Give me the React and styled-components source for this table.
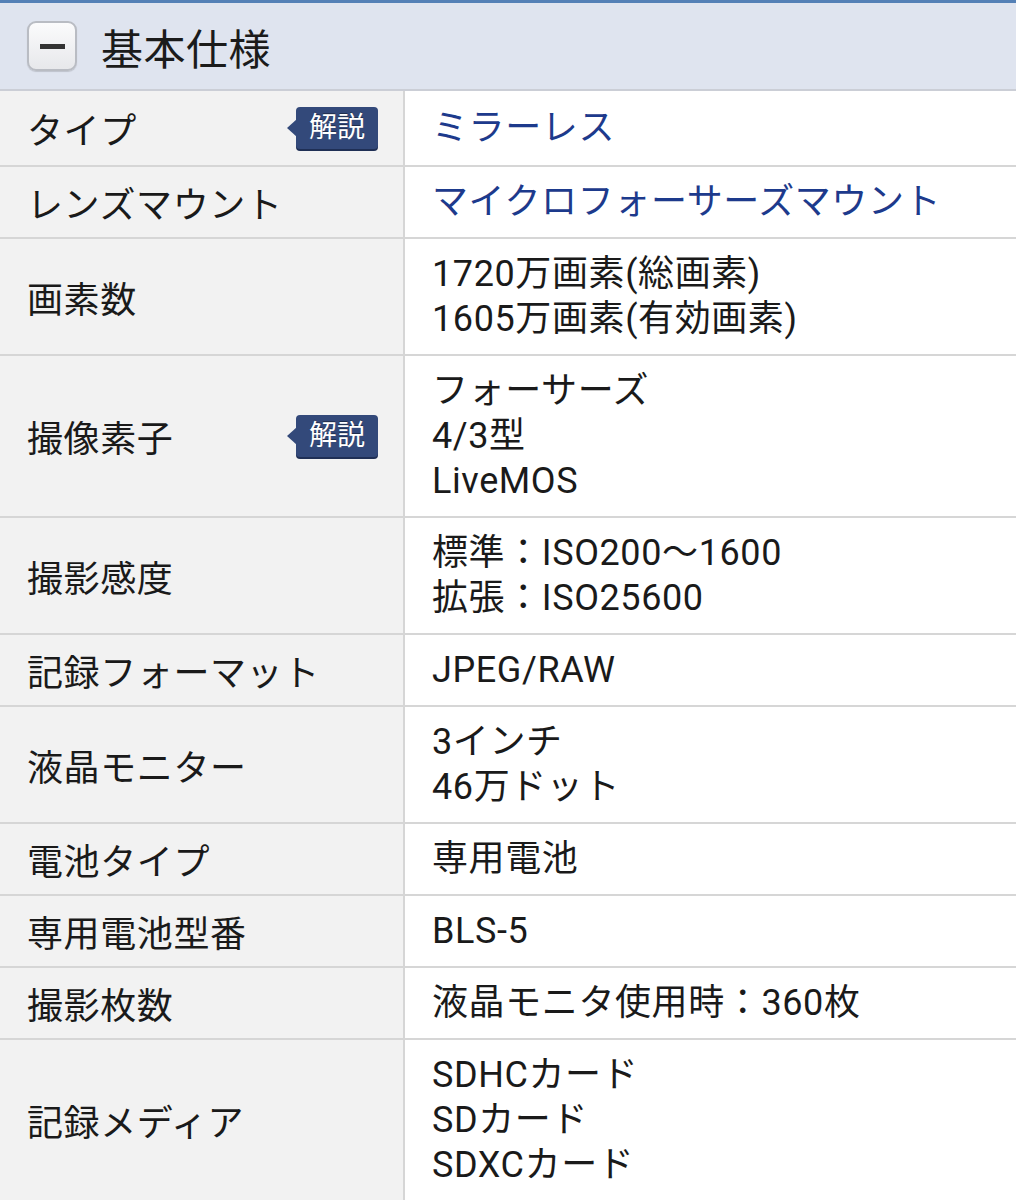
import React from 'react'
import { styled, createGlobalStyle } from 'styled-components'

const Global = createGlobalStyle`
  html, body {
    margin: 0;
    padding: 0;
    background: #ffffff;
  }
  body {
    font-family: Roboto, "Noto Sans CJK JP", "Noto Sans", sans-serif;
    color: #1a1a1a;
  }
`

const Section = styled.div`
  width: 1016px;
  border-top: 3px solid #5480b6;
`

const Header = styled.div`
  height: 86px;
  display: flex;
  align-items: center;
  gap: 24px;
  padding-left: 27px;
  background: #dfe4ef;
  border-bottom: 2px solid #cbced6;
`

const ToggleButton = styled.div`
  width: 50px;
  height: 50px;
  box-sizing: border-box;
  border: 2px solid #b9bcc3;
  border-radius: 9px;
  background: linear-gradient(#fbfbfc, #e7e8eb);
  box-shadow: 0 1px 1px rgba(0, 0, 0, 0.15);
  display: flex;
  align-items: center;
  justify-content: center;

  span {
    display: block;
    width: 25px;
    height: 5px;
    background: #333;
  }
`

const Title = styled.h2`
  margin: 0;
  font-size: 42px;
  font-weight: 400;
  color: #1b1b1b;
  letter-spacing: 0.5px;
`

const Row = styled.div`
  display: grid;
  grid-template-columns: 405px 1fr;
  min-height: ${p => p.$min || 0}px;
  border-bottom: 2px solid #d6d6d6;
  letter-spacing: 0.6px;
`

const Label = styled.div`
  background: #f2f2f2;
  border-right: 2px solid #d6d6d6;
  display: flex;
  align-items: center;
  justify-content: space-between;
  padding: 0 25px 0 27px;
  font-size: 36px;
`

const Value = styled.div`
  display: flex;
  flex-direction: column;
  justify-content: center;
  padding: 12.5px 27px;
  font-size: 36px;
  line-height: 45px;
  color: ${p => (p.$link ? '#1d3a8c' : '#1a1a1a')};
`

const Badge = styled.span`
  position: relative;
  display: inline-block;
  background: #33497a;
  color: #fff;
  font-size: 28px;
  line-height: 42px;
  padding: 0 13px;
  letter-spacing: 0;
  border-radius: 4px;
  text-shadow: 0 -1px 0 rgba(0, 0, 0, 0.4);
  box-shadow: 0 2px 0 #1f2f55;

  &::before {
    content: '';
    position: absolute;
    left: -9px;
    top: 50%;
    margin-top: -9px;
    border-style: solid;
    border-width: 9px 10px 9px 0;
    border-color: transparent #33497a transparent transparent;
  }
`

const specs = [
  { label: 'タイプ', help: true, lines: ['ミラーレス'], link: true, min: 74 },
  { label: 'レンズマウント', lines: ['マイクロフォーサーズマウント'], link: true },
  { label: '画素数', lines: ['1720万画素(総画素)', '1605万画素(有効画素)'] },
  { label: '撮像素子', help: true, lines: ['フォーサーズ', '4/3型', 'LiveMOS'] },
  { label: '撮影感度', lines: ['標準：ISO200～1600', '拡張：ISO25600'] },
  { label: '記録フォーマット', lines: ['JPEG/RAW'] },
  { label: '液晶モニター', lines: ['3インチ', '46万ドット'] },
  { label: '電池タイプ', lines: ['専用電池'] },
  { label: '専用電池型番', lines: ['BLS-5'] },
  { label: '撮影枚数', lines: ['液晶モニタ使用時：360枚'] },
  { label: '記録メディア', lines: ['SDHCカード', 'SDカード', 'SDXCカード'] },
]

function App() {
  return (
    <>
      <Global />
      <Section>
        <Header>
          <ToggleButton><span /></ToggleButton>
          <Title>基本仕様</Title>
        </Header>
        {specs.map(s => (
          <Row key={s.label} $min={s.min}>
            <Label>
              <span>{s.label}</span>
              {s.help && <Badge>解説</Badge>}
            </Label>
            <Value $link={s.link}>
              {s.lines.map(l => <div key={l}>{l}</div>)}
            </Value>
          </Row>
        ))}
      </Section>
    </>
  )
}

export default App
